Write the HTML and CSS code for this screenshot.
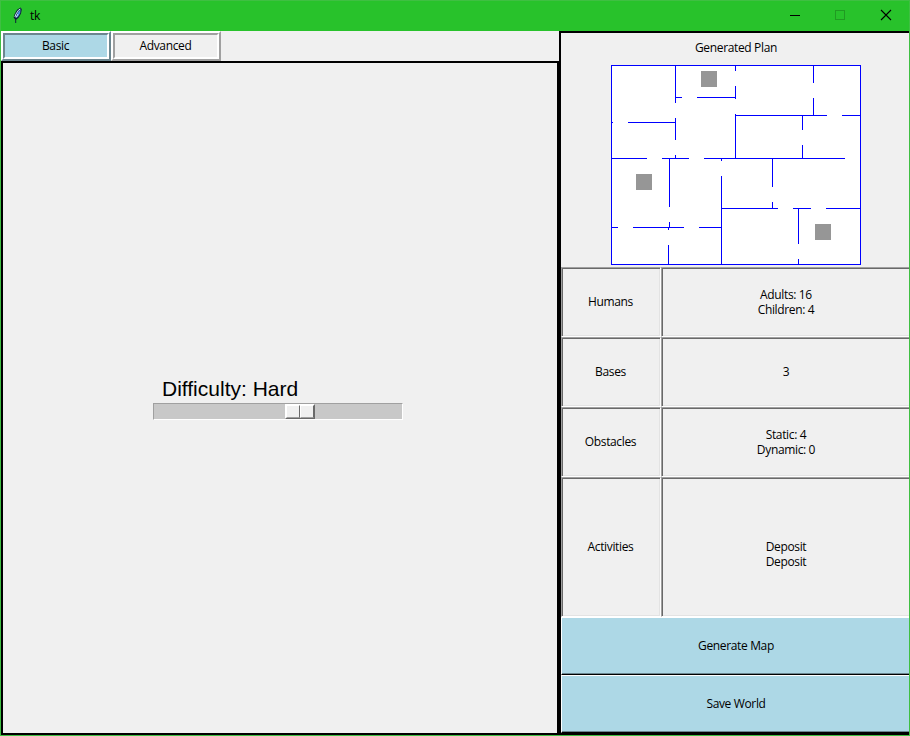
FILE: index.html
```
<!DOCTYPE html>
<html lang="en">
<head>
<meta charset="utf-8">
<title>tk</title>
<link rel="stylesheet" href="styles.css">
</head>
<body>
<div class="window">
  <header class="titlebar">
    <svg class="feather" width="12" height="17" viewBox="0 0 12 17">
      <path d="M3.2 16V12.500L1.600 10.500 2.600 7 5.200 2.500 8.800.5 9.800 2.500 9 6.500 6.800 10.500 4.200 12.800V16Z" fill="#0c2238"/>
      <path d="M4 11 5.500 6 8.600 2 8.200 6 6 9.800Z" fill="#4f8fe0"/>
      <path d="M2.900 10 4 7 6.500 3.200 8.200 2M4 10.500 6 7" stroke="#c9e3ff" stroke-width="1" fill="none"/>
    </svg>
    <span class="title">tk</span>
    <svg class="controls" width="138" height="30" viewBox="0 0 138 30" shape-rendering="crispEdges">
      <path d="M19 15.500H29" stroke="#000"/>
      <rect x="64.500" y="10.500" width="9" height="9" fill="none" stroke="#209b22"/>
      <path d="M110 10 120 20M120 10 110 20" stroke="#000" stroke-width="1.100" shape-rendering="auto"/>
    </svg>
  </header>
  <main class="content">
    <section class="left">
      <nav class="tabs">
        <div class="tab active"><span>Basic</span></div>
        <div class="tab"><span>Advanced</span></div>
      </nav>
      <div class="settings">
        <div class="difficulty">
          <div class="difficulty-label">Difficulty: Hard</div>
          <div class="trough"><div class="thumb"><i></i><i></i></div></div>
        </div>
      </div>
    </section>
    <section class="right">
      <h1 class="caption"><span>Generated Plan</span></h1>
      <svg class="plan" width="250" height="200" viewBox="611 65 250 200" shape-rendering="crispEdges">
        <rect x="611.500" y="65.500" width="249" height="199" fill="#fff" stroke="#00f"/>
        <g fill="#969696">
          <rect x="701" y="71" width="16" height="16"/>
          <rect x="636" y="174" width="16" height="16"/>
          <rect x="815" y="224" width="16" height="16"/>
        </g>
        <path fill="none" stroke="#00f" d="M675 97.500H682M697 97.500H736M611 122.500H613M628 122.500H676M735 115.500H827M842 115.500H861M611 158.500H647M662 158.500H689M704 158.500H845M721 208.500H778M793 208.500H811M826 208.500H861M611 227.500H618M633 227.500H684M699 227.500H722"/>
        <path fill="none" stroke="#00f" d="M675.500 65V103M675.500 118V140M675.500 155V159M735.500 65V71M735.500 86V99M735.500 114V159M813.500 65V83M813.500 98V116M802.500 115V130M802.500 145V159M772.500 158V187M772.500 202V209M669.500 158V207M669.500 222V228M721.500 158V161M721.500 176V265M668.500 227V230M668.500 245V265M798.500 208V244M798.500 259V265"/>
      </svg>
      <div class="stats">
        <div class="cell label"><span>Humans</span></div>
        <div class="cell"><span>Adults: 16<br>Children: 4</span></div>
        <div class="cell label"><span>Bases</span></div>
        <div class="cell value"><span>3</span></div>
        <div class="cell label"><span>Obstacles</span></div>
        <div class="cell"><span>Static: 4<br>Dynamic: 0</span></div>
        <div class="cell label"><span>Activities</span></div>
        <div class="cell list"><span>Deposit<br>Deposit</span></div>
      </div>
      <div class="action"><span>Generate Map</span></div>
      <div class="action"><span>Save World</span></div>
    </section>
  </main>
</div>
</body>
</html>
```
FILE: styles.css
```
* { box-sizing: border-box; }
body {
  margin: 0;
  font: 12px/15px "Open Sans", "Noto Sans", sans-serif;
  letter-spacing: -0.35px;
  color: #000;
}
.window {
  width: 910px;
  height: 736px;
  border: 1px solid #3fbf42;
  background: #f0f0f0;
  overflow: hidden;
}
.titlebar {
  display: flex;
  align-items: flex-start;
  height: 30px;
  background: #28c22b;
}
.feather { margin: 6px 0 0 11px; }
.title { margin: 7px 0 0 6px; }
.controls { margin: -1px 0 0 auto; }
.content {
  display: grid;
  grid-template-columns: 558px 350px;
  height: 704px;
}
.left { display: flex; flex-direction: column; }
.tabs { display: flex; height: 30px; }
.tab {
  display: flex;
  width: 110px;
  border: 2px solid;
  border-color: #fff #a0a0a0 #a0a0a0 #fff;
}
.tab span {
  flex: 1;
  border: 2px solid;
  border-color: #a0a0a0 #fff #fff #a0a0a0;
  padding-right: 1px;
  text-align: center;
  line-height: 22px;
}
.tab.active { border-color: #fff #6b868f #6b868f #fff; }
.tab.active span {
  border-color: #6b868f #fff #fff #6b868f;
  background: #add8e6;
}
.settings {
  flex: 1;
  border: 2px solid #000;
  padding: 313px 0 0 150px;
}
.difficulty { width: 250px; }
.difficulty-label {
  padding-left: 9px;
  height: 27px;
  font: 21px/26px "Liberation Sans", Arial, sans-serif;
  letter-spacing: 0;
}
.trough {
  height: 17px;
  border: 1px solid;
  border-color: #a0a0a0 #fff #fff #a0a0a0;
  background: #c8c8c8;
  padding-left: 131px;
}
.thumb {
  display: flex;
  width: 30px;
  height: 15px;
  border: 1px solid;
  border-color: #fff #696969 #696969 #fff;
}
.thumb i {
  flex: 1;
  border: 1px solid;
  border-color: #fff #696969 #a0a0a0 #fff;
  background: #f0f0f0;
}
.right {
  border: 2px solid #000;
  border-right: 0;
  width: 352px;
}
.caption {
  margin: 0;
  height: 32px;
  font: inherit;
  line-height: 30px;
  text-align: center;
}
.plan { display: block; margin: 0 auto 2px; }
.stats {
  display: grid;
  grid-template-columns: 100px 250px;
  grid-template-rows: 70px 70px 70px 140px;
}
.cell {
  display: flex;
  align-items: center;
  justify-content: center;
  border: 1px solid;
  border-color: #a0a0a0 #fff #fff #a0a0a0;
  box-shadow: inset 1px 1px #696969, inset -1px -1px #e3e3e3;
  text-align: center;
}
.label { padding: 0 1px 2px 0; }
.value { padding-bottom: 2px; }
.list { padding-top: 14px; }
.action {
  height: 58px;
  border: 1px solid;
  border-color: #fff #000 #000 #fff;
  box-shadow: inset 0 -1px #6b868f;
  background: #add8e6;
  text-align: center;
  line-height: 56px;
}
```
